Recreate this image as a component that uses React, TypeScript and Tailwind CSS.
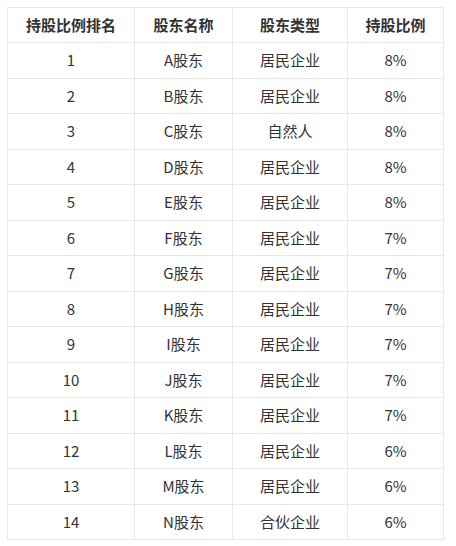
const rows = [
  ["1", "A股东", "居民企业", "8%"],
  ["2", "B股东", "居民企业", "8%"],
  ["3", "C股东", "自然人", "8%"],
  ["4", "D股东", "居民企业", "8%"],
  ["5", "E股东", "居民企业", "8%"],
  ["6", "F股东", "居民企业", "7%"],
  ["7", "G股东", "居民企业", "7%"],
  ["8", "H股东", "居民企业", "7%"],
  ["9", "I股东", "居民企业", "7%"],
  ["10", "J股东", "居民企业", "7%"],
  ["11", "K股东", "居民企业", "7%"],
  ["12", "L股东", "居民企业", "6%"],
  ["13", "M股东", "居民企业", "6%"],
  ["14", "N股东", "合伙企业", "6%"],
];

const headers = ["持股比例排名", "股东名称", "股东类型", "持股比例"];
const widths = ["w-[127px]", "w-[98px]", "w-[115px]", "w-[96px]"];

export default function App() {
  return (
    <div className="min-h-screen bg-white p-[7px] font-['Noto_Sans_CJK_SC',sans-serif] text-[15px] text-[#333]">
      <table className="border-collapse table-fixed w-[437px]">
        <thead>
          <tr className="h-[35px]">
            {headers.map((h, i) => (
              <th
                key={h}
                className={`${widths[i]} border border-[#e8e8e8] p-0 text-center font-bold text-[#333]`}
              >
                {h}
              </th>
            ))}
          </tr>
        </thead>
        <tbody>
          {rows.map((r) => (
            <tr key={r[0]} className="h-[35.5px]">
              {r.map((c, i) => (
                <td key={i} className="border border-[#e8e8e8] p-0 text-center">
                  {c}
                </td>
              ))}
            </tr>
          ))}
        </tbody>
      </table>
    </div>
  );
}
